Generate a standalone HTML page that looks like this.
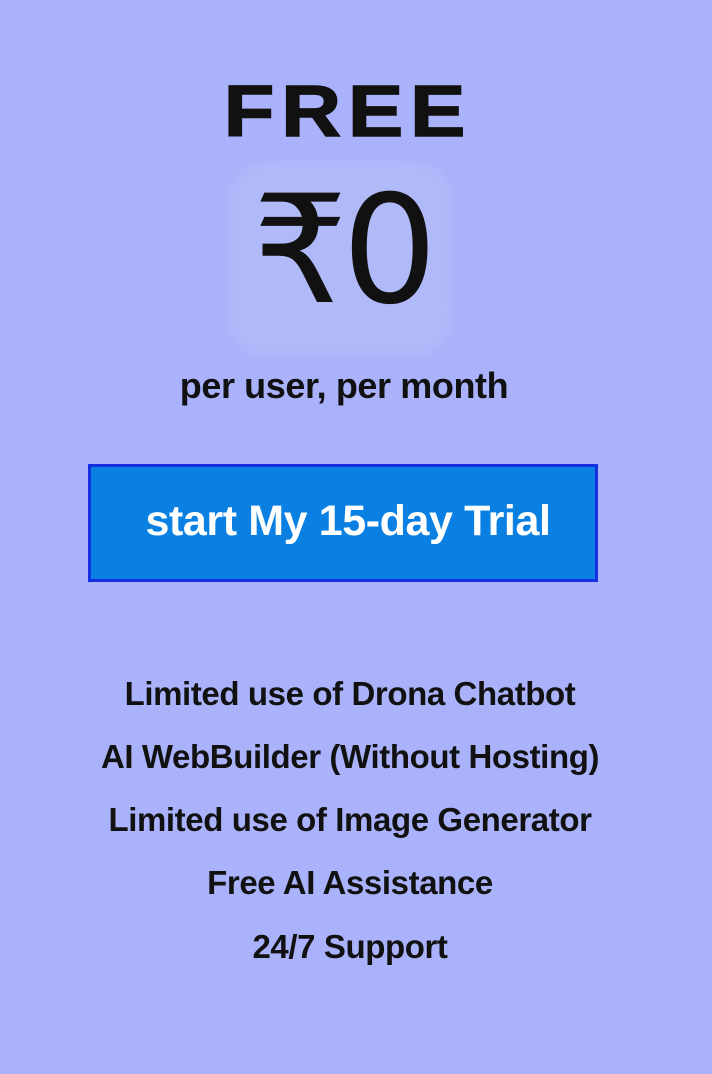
<!DOCTYPE html>
<html><head><meta charset="utf-8"><style>
html,body{margin:0;padding:0}
body{width:712px;height:1074px;background:#a9b2fa;position:relative;overflow:hidden;font-family:"Liberation Sans","DejaVu Sans",sans-serif;color:#111}
.a{position:absolute;left:0;width:712px;text-align:center;white-space:nowrap}
#free{top:72px;font-size:72px;font-weight:bold;letter-spacing:6px;line-height:80px;left:-8px;-webkit-text-stroke:1.5px #111;transform:scaleX(1.15)}
#glow{position:absolute;left:228px;top:162px;width:225px;height:195px;background:#b0baf9;border-radius:40px;filter:blur(6px)}
#price{top:176px;font-size:150px;line-height:150px;font-family:"DejaVu Sans","Liberation Sans",sans-serif;left:-14px;letter-spacing:-6px}
#per{top:366px;font-size:36px;font-weight:bold;line-height:40px;left:-12px;letter-spacing:-0.4px}
#btn{position:absolute;left:88px;top:464px;width:504px;height:112px;background:#0a80e2;border:3px solid #1530e0}
#btn span{position:absolute;left:5px;width:100%;top:29px;text-align:center;color:#fff;font-size:43px;font-weight:bold;line-height:50px;letter-spacing:-0.4px}
.f{font-size:33px;font-weight:bold;line-height:38px;letter-spacing:-0.4px;left:-6px}
</style></head><body>
<div class="a" id="free">FREE</div>
<div id="glow"></div>
<div class="a" id="price">₹0</div>
<div class="a" id="per">per user, per month</div>
<div id="btn"><span>start My 15-day Trial</span></div>
<div class="a f" style="top:675px">Limited use of Drona Chatbot</div>
<div class="a f" style="top:738px">AI WebBuilder (Without Hosting)</div>
<div class="a f" style="top:801px">Limited use of Image Generator</div>
<div class="a f" style="top:864px">Free AI Assistance</div>
<div class="a f" style="top:928px">24/7 Support</div>
</body></html>
